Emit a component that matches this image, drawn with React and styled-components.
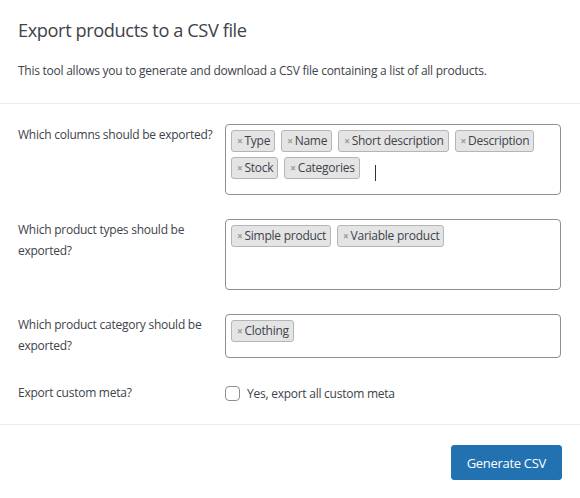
import React from "react";
import styled, { createGlobalStyle } from "styled-components";

const Global = createGlobalStyle`
  html, body { margin: 0; padding: 0; background: #fff; }
  body {
    font-family: "Open Sans", "Noto Sans", sans-serif;
    color: #3c434a;
    -webkit-font-smoothing: antialiased;
  }
  * { box-sizing: border-box; }
`;

const Page = styled.div`
  width: 580px;
  height: 498px;
  background: #fff;
  display: flex;
  flex-direction: column;
`;

const Header = styled.header`
  padding: 18px 18px 22px;
  border-bottom: 1px solid #ececec;
`;

const Title = styled.h2`
  margin: 0;
  font-size: 18.2px;
  line-height: 24px;
  font-weight: 400;
  color: #3c434a;
  letter-spacing: -0.4px;
`;

const Desc = styled.p`
  margin: 19px 0 0;
  font-size: 12px;
  line-height: 20px;
  color: #3c434a;
  letter-spacing: -0.25px;
`;

const Body = styled.div`
  padding: 20px 19px 20px 18px;
  display: flex;
  flex-direction: column;
  gap: 24px;
  border-bottom: 1px solid #ececec;
`;

const Row = styled.div`
  display: grid;
  grid-template-columns: 207px 1fr;
  align-items: start;
`;

const Label = styled.label`
  font-size: 12px;
  line-height: 21px;
  color: #3c434a;
  padding-right: 10px;
  margin-top: -0.5px;
  letter-spacing: -0.25px;
`;

const Select = styled.div`
  border: 1px solid #8c8f94;
  border-radius: 4px;
  min-height: ${(p) => p.$minH || 44}px;
  padding: 5px 4px 15px 5px;
  display: flex;
  flex-wrap: wrap;
  align-content: flex-start;
  align-items: flex-start;
  gap: 5px 6px;
  background: #fff;
`;

const Tag = styled.span`
  display: inline-flex;
  align-items: center;
  height: 22px;
  padding: 0 4px 1px 5px;
  background: #e4e4e4;
  border: 1px solid #b5b5b5;
  border-radius: 3px;
  font-size: 12px;
  color: #3c434a;
  letter-spacing: -0.25px;
`;

const Remove = styled.span`
  color: #999;
  font-size: 10px;
  font-weight: 700;
  margin-right: 2px;
  line-height: 1;
`;

const Cursor = styled.span`
  display: inline-block;
  width: 1px;
  height: 16px;
  background: #333;
  margin: 8px 0 -2px 9px;
`;

const CheckRow = styled.label`
  display: flex;
  align-items: center;
  gap: 7px;
  padding-top: 1px;
  font-size: 12px;
  line-height: 21px;
  color: #3c434a;
  letter-spacing: -0.25px;
`;

const Box = styled.span`
  width: 15px;
  height: 15px;
  border: 1px solid #8c8f94;
  border-radius: 4px;
  background: #fff;
  display: inline-block;
`;

const Footer = styled.div`
  padding: 20px 18px 19px;
  display: flex;
  justify-content: flex-end;
`;

const Button = styled.button`
  height: 35px;
  padding: 0 15px;
  background: #2271b1;
  border: 1px solid #2271b1;
  border-radius: 3px;
  color: #fff;
  font-family: inherit;
  font-size: 13px;
  letter-spacing: -0.3px;
  cursor: pointer;
`;

const TagList = ({ items, minH, cursor }) => (
  <Select $minH={minH}>
    {items.map((t) => (
      <Tag key={t}>
        <Remove>×</Remove>
        {t}
      </Tag>
    ))}
    {cursor && <Cursor />}
  </Select>
);

export default function App() {
  return (
    <>
      <Global />
      <Page>
        <Header>
          <Title>Export products to a CSV file</Title>
          <Desc>
            This tool allows you to generate and download a CSV file containing a list of all
            products.
          </Desc>
        </Header>
        <Body>
          <Row>
            <Label>Which columns should be exported?</Label>
            <TagList
              minH={71}
              cursor
              items={["Type", "Name", "Short description", "Description", "Stock", "Categories"]}
            />
          </Row>
          <Row>
            <Label>Which product types should be exported?</Label>
            <TagList minH={71} items={["Simple product", "Variable product"]} />
          </Row>
          <Row>
            <Label>Which product category should be exported?</Label>
            <TagList minH={44} items={["Clothing"]} />
          </Row>
          <Row>
            <Label>Export custom meta?</Label>
            <CheckRow>
              <Box />
              Yes, export all custom meta
            </CheckRow>
          </Row>
        </Body>
        <Footer>
          <Button>Generate CSV</Button>
        </Footer>
      </Page>
    </>
  );
}
